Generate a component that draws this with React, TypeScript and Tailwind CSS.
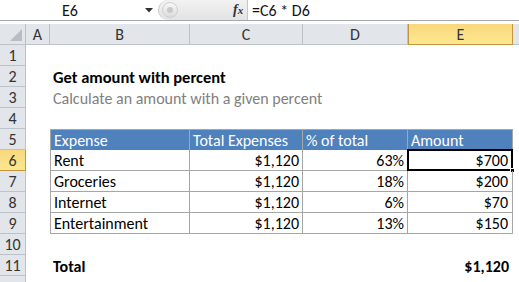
import React from "react";

const cols = [
  { key: "A", w: "w-[24px]" },
  { key: "B", w: "w-[140px]" },
  { key: "C", w: "w-[113px]" },
  { key: "D", w: "w-[105px]" },
  { key: "E", w: "w-[105px]" },
];

const data = [
  ["Rent", "$1,120", "63%", "$700"],
  ["Groceries", "$1,120", "18%", "$200"],
  ["Internet", "$1,120", "6%", "$70"],
  ["Entertainment", "$1,120", "13%", "$150"],
];

function RowHeader({ n, active }: { n?: number; active?: boolean }) {
  return (
    <div
      className={
        "w-[26px] shrink-0 h-full flex items-center justify-center pt-[2px] border-r border-b text-[16px] " +
        (active
          ? "bg-gradient-to-b from-[#f9d77e] to-[#fde88f] border-[#c5943c] text-[#333]"
          : "bg-[#e2e5ea] border-[#bcc2ca] text-[#333]")
      }
    >
      {n}
    </div>
  );
}

function Empty({ w }: { w: string }) {
  return <div className={w + " shrink-0 h-full"} />;
}

export default function App() {
  return (
    <div className="w-[519px] h-[282px] overflow-hidden bg-white font-[Carlito,Lato,sans-serif] text-[16px] text-black leading-none">
      {/* formula bar */}
      <div className="h-[21px] flex items-center border-b border-[#a3a9b1] bg-white">
        <div className="w-[140px] shrink-0 flex justify-center pt-[1px] text-[16px] text-[#111]">E6</div>
        <div className="w-[18px] shrink-0 flex items-center">
          <svg width="8" height="5" viewBox="0 0 8 5" className="ml-[5px]">
            <path d="M0 0 H8 L4 4.5 Z" fill="#333" />
          </svg>
        </div>
        <div className="w-[89px] h-[20px] shrink-0 rounded-l-full bg-gradient-to-b from-[#f2f2f2] to-[#e3e3e3] border-l border-[#c9c9c9] flex items-center relative">
          <div className="ml-[3px] w-[16px] h-[16px] rounded-full bg-gradient-to-b from-[#f7f7f7] to-[#dcdcdc] border border-[#cfcfcf] flex items-center justify-center">
            <div className="w-[6px] h-[6px] rounded-full bg-[#c9c9c9]" />
          </div>
          <span className="absolute left-[74px] top-[3px] font-['Liberation_Serif',serif] italic font-bold text-[14px] text-[#333]">
            f<span className="text-[11px]">x</span>
          </span>
        </div>
        <div className="w-px h-[20px] bg-[#c7c7c7] shrink-0" />
        <div className="pl-[4px] pt-[1px] text-[16px] text-[#111]">=C6 * D6</div>
      </div>
      <div className="h-[3px] bg-white" />
      {/* column headers */}
      <div className="h-[21px] flex">
        <div className="w-[26px] shrink-0 h-full bg-[#e2e5ea] border-r border-b border-[#bcc2ca] relative">
          <svg width="12" height="12" viewBox="0 0 12 12" className="absolute right-[3px] bottom-[3px]">
            <path d="M12 0 V12 H0 Z" fill="#b9bdc3" />
          </svg>
        </div>
        {cols.map((c) => (
          <div
            key={c.key}
            className={
              c.w +
              " shrink-0 h-full flex items-center justify-center pt-[2px] border-r border-b text-[16px] " +
              (c.key === "E"
                ? "bg-gradient-to-b from-[#f9d77e] to-[#fde88f] border-[#c5943c] border-l text-[#333]"
                : "bg-[#e2e5ea] border-[#bcc2ca] text-[#333]")
            }
          >
            {c.key}
          </div>
        ))}
        <div className="flex-1 h-full bg-[#e2e5ea] border-b border-[#bcc2ca]" />
      </div>

      {/* row 1 */}
      <div className="h-[21px] flex">
        <RowHeader n={1} />
      </div>
      {/* row 2 */}
      <div className="h-[21px] flex">
        <RowHeader n={2} />
        <Empty w="w-[24px]" />
        <div className="pl-[3px] pt-[2px] flex items-center font-bold text-[16.5px] whitespace-nowrap">Get amount with percent</div>
      </div>
      {/* row 3 */}
      <div className="h-[21px] flex">
        <RowHeader n={3} />
        <Empty w="w-[24px]" />
        <div className="pl-[3px] pt-[2px] flex items-center text-[16px] text-[#808080] whitespace-nowrap">
          Calculate an amount with a given percent
        </div>
      </div>
      {/* row 4 */}
      <div className="h-[21px] flex">
        <RowHeader n={4} />
      </div>
      {/* row 5 header */}
      <div className="h-[21px] flex">
        <RowHeader n={5} />
        <Empty w="w-[24px]" />
        {["Expense", "Total Expenses", "% of total", "Amount"].map((t, i) => (
          <div
            key={t}
            className={
              ["w-[140px]", "w-[113px]", "w-[105px]", "w-[105px]"][i] +
              " shrink-0 h-full bg-[#4f81bd] text-white flex items-center pl-[3px] pt-[2px] border-t border-r border-[#a6a6a6] whitespace-nowrap " +
              (i === 0 ? "border-l" : "")
            }
          >
            {t}
          </div>
        ))}
      </div>
      {/* data rows */}
      {data.map((r, ri) => (
        <div key={ri} className="h-[21px] flex">
          <RowHeader n={6 + ri} active={ri === 0} />
          <Empty w="w-[24px]" />
          <div className="w-[140px] shrink-0 h-full border-l border-r border-b border-[#a6a6a6] flex items-center pl-[3px] pt-[2px]">
            {r[0]}
          </div>
          <div className="w-[113px] shrink-0 h-full border-r border-b border-[#a6a6a6] flex items-center justify-end pr-[3px] pt-[2px]">
            {r[1]}
          </div>
          <div className="w-[105px] shrink-0 h-full border-r border-b border-[#a6a6a6] flex items-center justify-end pr-[3px] pt-[2px]">
            {r[2]}
          </div>
          <div className="w-[105px] shrink-0 h-full border-r border-b border-[#a6a6a6] flex items-center justify-end pr-[4px] pt-[2px] relative">
            {r[3]}
            {ri === 0 && (
              <>
                <div className="absolute left-[-1px] top-[-1px] right-[-1px] bottom-[-1px] border-2 border-black" />
                <div className="absolute right-[-3px] bottom-[-3px] w-[5px] h-[5px] bg-black border border-white" />
              </>
            )}
          </div>
        </div>
      ))}
      {/* row 10 */}
      <div className="h-[21px] flex">
        <RowHeader n={10} />
      </div>
      {/* row 11 */}
      <div className="h-[21px] flex">
        <RowHeader n={11} />
        <Empty w="w-[24px]" />
        <div className="w-[140px] shrink-0 pl-[3px] pt-[2px] flex items-center font-bold">Total</div>
        <Empty w="w-[113px]" />
        <Empty w="w-[105px]" />
        <div className="w-[105px] shrink-0 pr-[4px] pt-[2px] flex items-center justify-end font-bold">$1,120</div>
      </div>
      {/* row 12 */}
      <div className="h-[21px] flex">
        <RowHeader />
      </div>
    </div>
  );
}
